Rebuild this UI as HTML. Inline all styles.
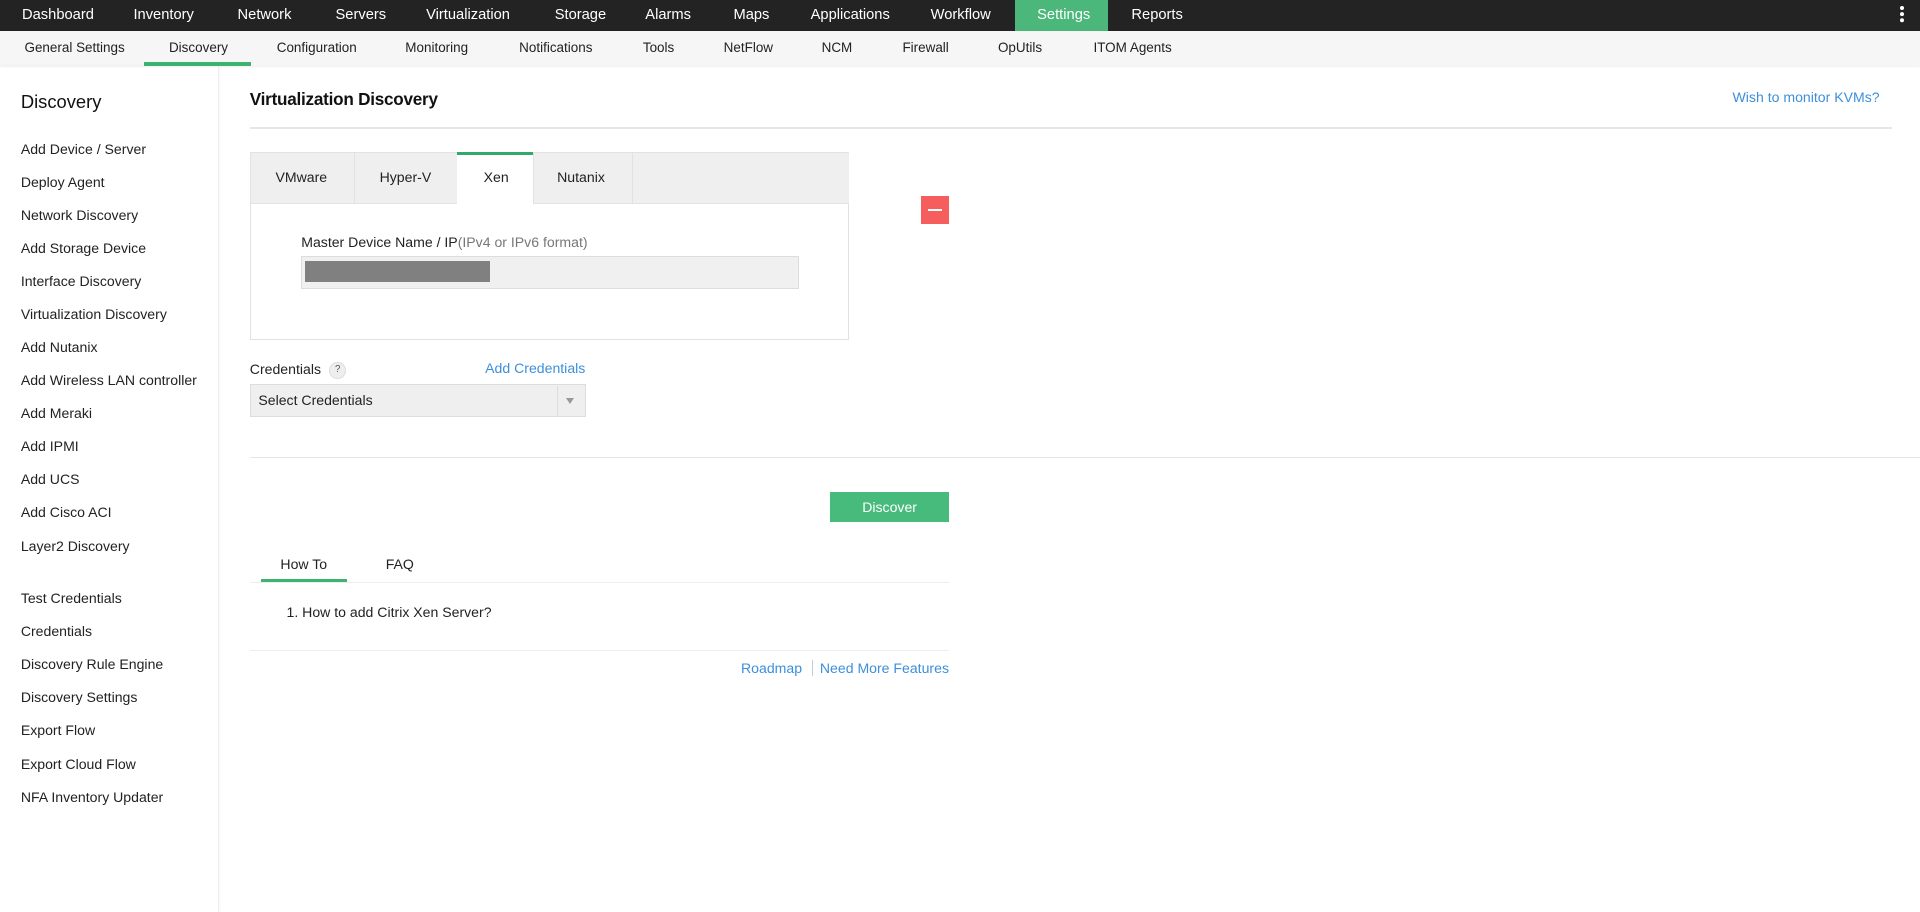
<!DOCTYPE html>
<html><head><meta charset="utf-8"><style>
html,body{margin:0;padding:0;background:#fff;overflow:hidden}
body{width:1920px;height:912px}
#w{zoom:1.22449;width:1568px;height:745px;position:relative;font-family:"Liberation Sans",sans-serif;color:#222;font-size:11.5px}
.a{position:absolute;white-space:nowrap}
.t{line-height:14px}
#top{position:absolute;left:0;top:0;width:1568px;height:25px;background:#232323}
#top span{position:absolute;top:0;line-height:25px;color:#fff;font-size:12px}
#sub{position:absolute;left:0;top:25px;width:1568px;height:29px;background:#f6f6f6;box-shadow:0 1px 2px rgba(0,0,0,.08)}
#sub span{position:absolute;top:0;line-height:28px;font-size:11px;color:#222}
#side{position:absolute;left:0;top:54px;width:178px;height:691px;border-right:1px solid #eee;box-shadow:1px 0 3px rgba(0,0,0,.05)}
.si{position:absolute;left:17px;font-size:11.5px;color:#222;line-height:14px}
.hr{position:absolute;height:1px;background:#e6e6e6}
.blue{color:#3d8fdb}
</style></head><body><div id="w">
<div id="top">
<span style="left:18px">Dashboard</span><span style="left:109px">Inventory</span><span style="left:194px">Network</span><span style="left:274px">Servers</span><span style="left:348px">Virtualization</span><span style="left:453px">Storage</span><span style="left:527px">Alarms</span><span style="left:599px">Maps</span><span style="left:662px">Applications</span><span style="left:760px">Workflow</span>
<div style="position:absolute;left:829px;top:0;width:76px;height:25px;background:#4cb77a"></div>
<span style="left:847px">Settings</span><span style="left:924px">Reports</span>
<div style="position:absolute;left:1552px;top:5px;width:3px;height:3px;border-radius:2px;background:#fff;box-shadow:0 5px 0 #fff,0 10px 0 #fff"></div>
</div>
<div id="sub">
<span style="left:20px">General Settings</span><span style="left:138px">Discovery</span><span style="left:226px">Configuration</span><span style="left:331px">Monitoring</span><span style="left:424px">Notifications</span><span style="left:525px">Tools</span><span style="left:591px">NetFlow</span><span style="left:671px">NCM</span><span style="left:737px">Firewall</span><span style="left:815px">OpUtils</span><span style="left:893px">ITOM Agents</span>
<div style="position:absolute;left:118px;top:26px;width:87px;height:3px;background:#3cb371"></div>
</div>
<div id="side"></div>
<div class="a" style="left:17px;top:74px;font-size:15px;line-height:18px;color:#111">Discovery</div>
<div class="si" style="top:115px">Add Device / Server</div>
<div class="si" style="top:142px">Deploy Agent</div>
<div class="si" style="top:169px">Network Discovery</div>
<div class="si" style="top:196px">Add Storage Device</div>
<div class="si" style="top:223px">Interface Discovery</div>
<div class="si" style="top:250px">Virtualization Discovery</div>
<div class="si" style="top:277px">Add Nutanix</div>
<div class="si" style="top:304px">Add Wireless LAN controller</div>
<div class="si" style="top:331px">Add Meraki</div>
<div class="si" style="top:358px">Add IPMI</div>
<div class="si" style="top:385px">Add UCS</div>
<div class="si" style="top:412px">Add Cisco ACI</div>
<div class="si" style="top:439px">Layer2 Discovery</div>
<div class="si" style="top:482px">Test Credentials</div>
<div class="si" style="top:509px">Credentials</div>
<div class="si" style="top:536px">Discovery Rule Engine</div>
<div class="si" style="top:563px">Discovery Settings</div>
<div class="si" style="top:590px">Export Flow</div>
<div class="si" style="top:617px">Export Cloud Flow</div>
<div class="si" style="top:644px">NFA Inventory Updater</div>

<div class="a" style="left:204px;top:72px;font-size:14px;line-height:18px;color:#111;font-weight:bold;letter-spacing:-0.2px">Virtualization Discovery</div>
<div class="a blue t" style="right:33px;top:73px;font-size:11.5px">Wish to monitor KVMs?</div>
<div class="hr" style="left:204px;top:104px;width:1341px"></div>

<div style="position:absolute;left:204px;top:124px;width:488px;height:152px;border:1px solid #e2e2e2"></div>
<div style="position:absolute;left:205px;top:125px;width:488px;height:41px;background:#efefef;border-bottom:1px solid #e2e2e2"></div>
<div style="position:absolute;left:289px;top:125px;width:1px;height:41px;background:#e2e2e2"></div>
<div style="position:absolute;left:373px;top:124px;width:62px;height:43px;background:#fff;border-top:3px solid #2eaa6a;box-sizing:border-box"></div>
<div style="position:absolute;left:435px;top:125px;width:1px;height:41px;background:#e2e2e2"></div>
<div style="position:absolute;left:516px;top:125px;width:1px;height:41px;background:#e2e2e2"></div>
<div class="a t" style="left:225px;top:138px">VMware</div>
<div class="a t" style="left:310px;top:138px">Hyper-V</div>
<div class="a t" style="left:395px;top:138px">Xen</div>
<div class="a t" style="left:455px;top:138px">Nutanix</div>
<div class="a t" style="left:246px;top:191px">Master Device Name / IP<span style="color:#777">(IPv4 or IPv6 format)</span></div>
<div style="position:absolute;left:246px;top:209px;width:405px;height:25px;background:#f0f0f0;border:1px solid #ddd"></div>
<div style="position:absolute;left:249px;top:213px;width:151px;height:17px;background:#808080"></div>
<div style="position:absolute;left:752px;top:160px;width:23px;height:23px;background:#f65d5d"></div>
<div style="position:absolute;left:758px;top:171px;width:11px;height:1px;background:#fff"></div>

<div class="a t" style="left:204px;top:295px">Credentials</div>
<div style="position:absolute;left:269px;top:296px;width:12px;height:12px;border-radius:50%;background:#eee;border:1px solid #ddd;font-size:8px;line-height:12px;text-align:center;color:#555">?</div>
<div class="a t blue" style="right:1090px;top:294px">Add Credentials</div>
<div style="position:absolute;left:204px;top:314px;width:273px;height:25px;background:#efefef;border:1px solid #ddd"></div>
<div style="position:absolute;left:455px;top:315px;width:1px;height:25px;background:#ddd"></div>
<div class="a t" style="left:211px;top:320px">Select Credentials</div>
<div style="position:absolute;left:462px;top:325px;border-left:4px solid transparent;border-right:4px solid transparent;border-top:5px solid #999"></div>

<div class="hr" style="left:204px;top:373px;width:1364px"></div>
<div style="position:absolute;left:678px;top:402px;width:97px;height:24px;background:#46bb7c;color:#fff;text-align:center;line-height:26px;font-size:11.5px">Discover</div>
<div class="a t" style="left:229px;top:454px">How To</div>
<div class="a t" style="left:315px;top:454px">FAQ</div>
<div class="hr" style="left:204px;top:475px;width:571px;background:#eee"></div>
<div style="position:absolute;left:213px;top:473px;width:70px;height:2px;background:#3cb371"></div>
<div class="a t" style="left:234px;top:493px">1. How to add Citrix Xen Server?</div>
<div class="hr" style="left:204px;top:531px;width:571px;background:#eee"></div>
<div class="a t blue" style="right:913px;top:539px">Roadmap</div>
<div style="position:absolute;left:663px;top:539px;width:1px;height:13px;background:#ccc"></div>
<div class="a t blue" style="right:793px;top:539px">Need More Features</div>
</div></body></html>
